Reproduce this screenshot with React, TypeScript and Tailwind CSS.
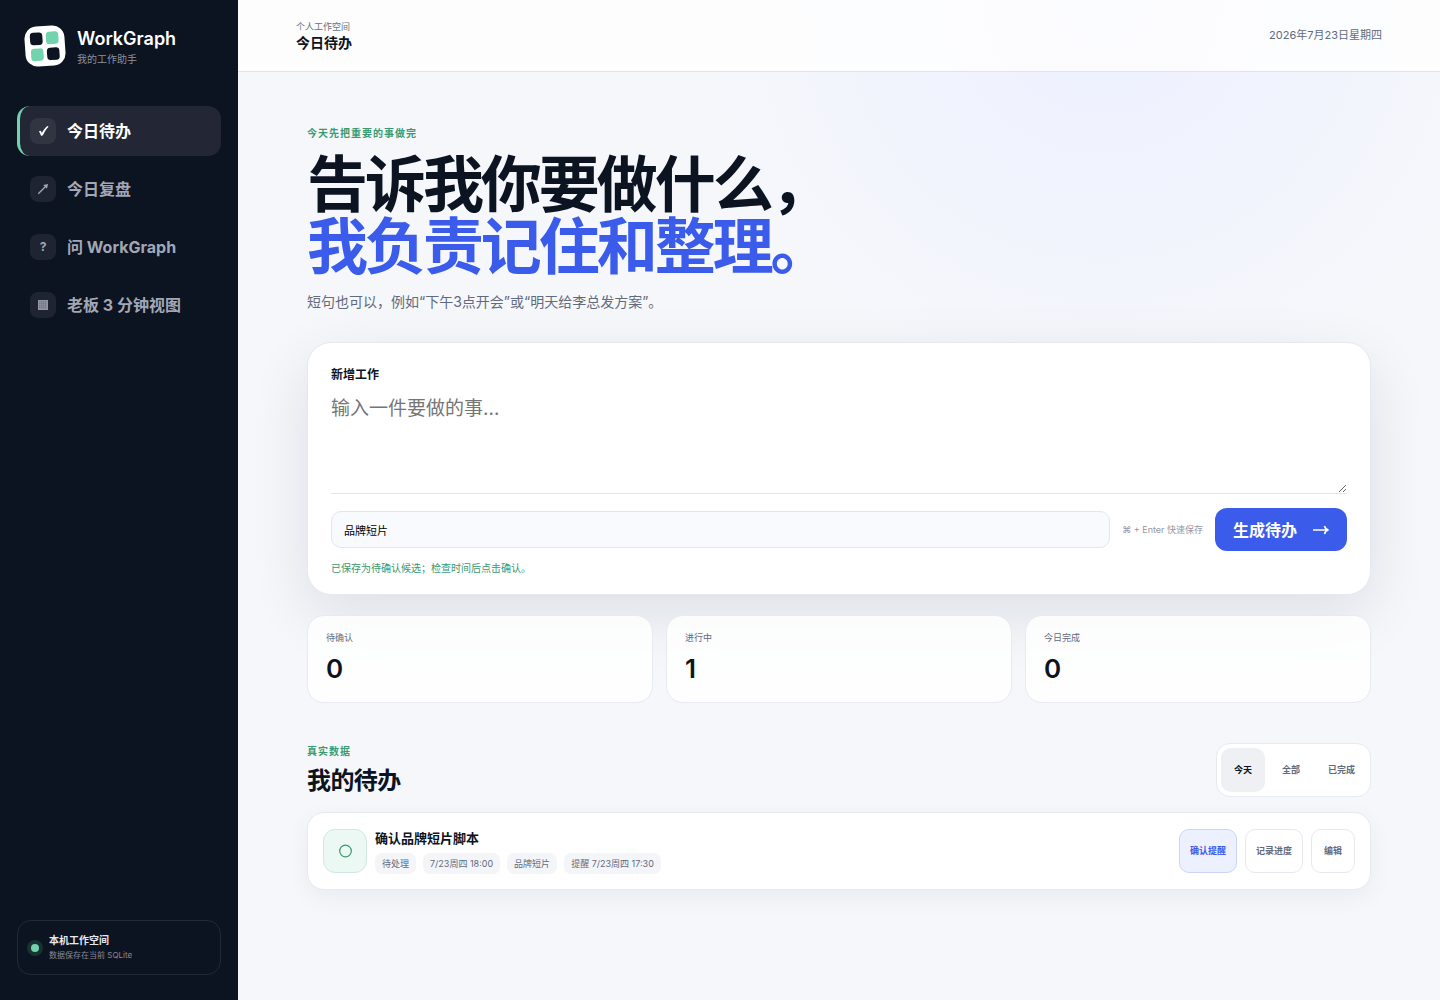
import type { ReactNode } from "react";

const navItems: { icon: ReactNode; label: string; active?: boolean }[] = [
  { icon: <CheckIcon />, label: "今日待办", active: true },
  { icon: <ArrowUpRight />, label: "今日复盘" },
  { icon: "?", label: "问 WorkGraph" },
  { icon: <GridIcon />, label: "老板 3 分钟视图" },
];

const stats = [
  { label: "待确认", value: 0 },
  { label: "进行中", value: 1 },
  { label: "今日完成", value: 0 },
];

const tags = ["待处理", "7/23周四 18:00", "品牌短片", "提醒 7/23周四 17:30"];

function CheckIcon() {
  return (
    <svg width="12" height="12" viewBox="0 0 12 12" fill="currentColor" className="ml-px" aria-hidden="true">
      <path d="M1 6.400C1.800 5.500 2.900 5.700 3.300 6.600L3.900 7.900C5.200 5.300 7 2.800 9.400 1L10.600 1.700C8.300 4 6.500 6.800 5 10.300C4.400 10.900 3.400 11 2.900 10.400C2.500 9 1.900 7.500 1 6.400Z" />
    </svg>
  );
}

function ArrowUpRight() {
  return (
    <svg width="12" height="12" viewBox="0 0 12 12" fill="none" stroke="currentColor" aria-hidden="true">
      <path d="M1.300 10.700 9 3" strokeWidth="1.300" />
      <path d="M11 1 10 5.800 6.200 2z" fill="currentColor" stroke="none" />
    </svg>
  );
}

function GridIcon() {
  return (
    <svg width="10" height="10" viewBox="0 0 10 10" aria-hidden="true">
      <rect x="0.500" y="0.500" width="9" height="9" fill="#747986" stroke="#9499a6" />
      <path d="M2.500 1v8M4.500 1v8M6.500 1v8M8.500 1v8M1 2.500h8M1 4.500h8M1 6.500h8M1 8.500h8" stroke="#9297a4" strokeWidth="0.500" />
    </svg>
  );
}

function Logo() {
  return (
    <svg width="42" height="42" viewBox="0 0 42 42" className="shrink-0" aria-hidden="true">
      <g transform="rotate(-4 21 21)">
        <rect x="1" y="1" width="40" height="40" rx="12" fill="#fff" />
        <rect x="6.500" y="7" width="12.500" height="12.500" rx="3.500" fill="#0c1321" />
        <rect x="22.500" y="7" width="12.500" height="12.500" rx="3.500" fill="#72d4ae" />
        <rect x="6.500" y="23" width="12.500" height="12.500" rx="3.500" fill="#72d4ae" />
        <rect x="22.500" y="23" width="12.500" height="12.500" rx="3.500" fill="#0c1321" />
      </g>
    </svg>
  );
}

function Sidebar() {
  return (
    <aside className="sticky top-0 flex h-screen w-[238px] shrink-0 flex-col bg-[#0c1321] px-[17px] pt-6 pb-[25px]">
      <div className="flex items-center gap-[11px] pl-[7px]">
        <Logo />
        <div className="pt-[3px]">
          <div className="text-[18px] leading-[24px] font-semibold text-white">WorkGraph</div>
          <div className="text-[10px] leading-[17px] text-[#8b91a0]">我的工作助手</div>
        </div>
      </div>
      <nav className="mt-[38px] flex flex-col gap-2">
        {navItems.map((item) => (
          <button
            key={item.label}
            type="button"
            aria-current={item.active ? "page" : undefined}
            className={
              "flex h-[50px] items-center gap-[11px] rounded-[13px] border-l-3 pl-[10px] text-left text-[16px] font-bold " +
              (item.active ? "border-[#72d4ae] bg-[#232735] text-white" : "border-transparent text-[#a2a7b5]")
            }
          >
            <span
              className={
                "flex size-[26px] items-center justify-center rounded-lg text-[12px] " +
                (item.active ? "bg-[#313542]" : "bg-[#1e2431]")
              }
            >
              {item.icon}
            </span>
            {item.label}
          </button>
        ))}
      </nav>
      <div className="mt-auto flex h-[55px] items-center gap-[10px] rounded-[14px] border border-[#232937] pl-[13px]">
        <span className="size-2 shrink-0 rounded-full bg-[#72d4ae] ring-4 ring-[#173331]" />
        <div>
          <div className="text-[10px] leading-[15px] font-bold text-[#e4e8f1]">本机工作空间</div>
          <div className="text-[8px] leading-[14px] text-[#858b9a]">数据保存在当前 SQLite</div>
        </div>
      </div>
    </aside>
  );
}

function Composer() {
  return (
    <form className="mt-[29px] rounded-3xl border border-[#e5e8f0] bg-white px-[23px] pt-[23px] pb-[18px] shadow-[0_20px_60px_rgba(12,19,33,0.1)]">
      <label htmlFor="work" className="block text-[12px] leading-[18px] font-bold text-[#0c1321]">
        新增工作
      </label>
      <textarea
        id="work"
        placeholder="输入一件要做的事…"
        className="mt-2 block h-[102px] w-full resize-y border-b border-[#e2e5ed] pt-[3px] text-[19px] leading-[28px] text-[#0c1321] outline-none placeholder:text-[#757575]"
      />
      <div className="mt-[14px] flex items-center gap-3">
        <input
          aria-label="项目"
          defaultValue="品牌短片"
          className="h-[37px] min-w-0 flex-1 rounded-[10px] border border-[#e2e6ef] bg-[#f8fafd] px-3 text-[11px] text-black outline-none"
        />
        <span className="text-[9px] text-[#9297a5]">⌘ + Enter 快速保存</span>
        <button
          type="submit"
          className="flex h-[43px] items-center gap-4 rounded-xl bg-[#3b5ceb] px-[18px] text-[16px] font-bold text-white"
        >
          生成待办
          <svg width="16" height="12" viewBox="0 0 16 12" fill="none" stroke="currentColor" strokeWidth="1.600" aria-hidden="true">
            <path d="M0 6h15M11.500 2C12 4 13.500 5.700 15.500 6c-2 .3-3.500 2-4 4" />
          </svg>
        </button>
      </div>
      <p className="mt-[9px] text-[10px] leading-[16px] text-[#389a70]" role="status">
        已保存为待确认候选；检查时间后点击确认。
      </p>
    </form>
  );
}

function TaskRow() {
  const actionClass = "h-11 rounded-[10px] border px-[10px] text-[9px] font-bold ";
  return (
    <article className="mt-[15px] flex items-center rounded-[17px] border border-[#e7eaf1] bg-white p-[15px] shadow-[0_7px_24px_rgba(12,19,33,0.05)]">
      <button
        type="button"
        aria-label="标记完成"
        className="flex size-11 shrink-0 items-center justify-center rounded-xl border border-[#cfeadd] bg-[#ebf8f3]"
      >
        <svg width="14" height="14" viewBox="0 0 14 14" fill="none" stroke="#389a70" aria-hidden="true">
          <circle cx="7.500" cy="7" r="5.800" strokeWidth="1.200" />
        </svg>
      </button>
      <div className="ml-2 min-w-0 flex-1">
        <h3 className="text-[13px] leading-[20px] font-bold text-[#0c1321]">确认品牌短片脚本</h3>
        <div className="mt-[5px] flex flex-wrap gap-[7px]">
          {tags.map((tag) => (
            <span key={tag} className="rounded-[7px] bg-[#f4f5f9] px-[7px] text-[9px] leading-[21px] text-[#626a7d]">
              {tag}
            </span>
          ))}
        </div>
      </div>
      <div className="flex gap-2">
        <button type="button" className={actionClass + "border-[#ccd4fb] bg-[#edf0fe] text-[#3b5ceb]"}>
          确认提醒
        </button>
        <button type="button" className={actionClass + "border-[#e6e8f0] bg-white text-[#626a7d]"}>
          记录进度
        </button>
        <button type="button" className={actionClass + "min-w-11 border-[#e6e8f0] bg-white text-[#626a7d]"}>
          编辑
        </button>
      </div>
    </article>
  );
}

export default function App() {
  return (
    <div className="flex min-h-screen bg-[#f5f7fb] font-['Inter','Noto_Sans_CJK_SC',sans-serif]">
      <Sidebar />
      <div className="min-w-0 flex-1 bg-[radial-gradient(circle_at_72%_0%,#edf0ff_0,transparent_400px)]">
        <header className="flex h-[72px] items-center justify-between border-b border-[#e0e4ec] bg-white/80 px-[58px]">
          <div>
            <div className="text-[9px] leading-[14px] text-[#6a7181]">个人工作空间</div>
            <div className="text-[14px] leading-[18px] font-bold text-[#0c1321]">今日待办</div>
          </div>
          <time dateTime="2026-07-23" className="text-[11px] text-[#626a7d]">
            2026年7月23日星期四
          </time>
        </header>
        <main className="px-[58px] pt-[53px] pb-14">
          <div className="mx-auto max-w-[1064px]">
            <p className="text-[10px] leading-[16px] font-bold tracking-widest text-[#389a70]">今天先把重要的事做完</p>
            <h1 className="mt-[13px] text-[61px] leading-[62px] font-bold tracking-tighter text-[#0c1321]">
              <span className="block">告诉我你要做什么，</span>
              <span className="block text-[#3b5ceb]">我负责记住和整理。</span>
            </h1>
            <p className="mt-[13px] text-[14px] leading-[22px] text-[#626a7d]">
              短句也可以，例如“下午3点开会”或“明天给李总发方案”。
            </p>
            <Composer />
            <section className="mt-5 grid grid-cols-3 gap-[13px]">
              {stats.map((stat) => (
                <div key={stat.label} className="rounded-[17px] border border-[#e7eaf1] bg-white/85 px-[18px] pt-[15px] pb-[17px]">
                  <div className="text-[9px] leading-[14px] text-[#626a7d]">{stat.label}</div>
                  <div className="mt-2 text-[26px] leading-[32px] font-semibold text-[#0c1321]">{stat.value}</div>
                </div>
              ))}
            </section>
            <section className="mt-10">
              <div className="flex items-center justify-between">
                <div>
                  <p className="text-[10px] leading-[16px] font-bold tracking-widest text-[#389a70]">真实数据</p>
                  <h2 className="mt-[5px] text-[24px] leading-[33px] font-bold tracking-tight text-[#0c1321]">我的待办</h2>
                </div>
                <div className="flex gap-1 rounded-[14px] border border-[#e7eaf1] bg-white p-1">
                  <button type="button" aria-pressed="true" className="h-11 rounded-[10px] bg-[#eff0f4] px-[13px] text-[9px] font-bold text-[#0c1321]">
                    今天
                  </button>
                  <button type="button" aria-pressed="false" className="h-11 px-[13px] text-[9px] font-bold text-[#626a7d]">
                    全部
                  </button>
                  <button type="button" aria-pressed="false" className="h-11 px-[11px] text-[9px] font-bold text-[#626a7d]">
                    已完成
                  </button>
                </div>
              </div>
              <TaskRow />
            </section>
          </div>
        </main>
      </div>
    </div>
  );
}
